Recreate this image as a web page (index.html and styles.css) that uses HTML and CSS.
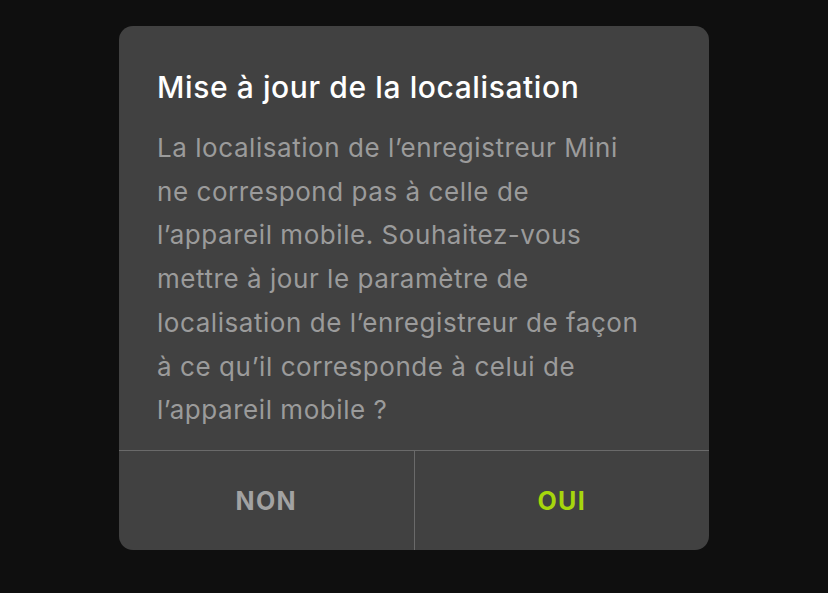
FILE: index.html
```html
<!DOCTYPE html>
<html lang="fr">
<head>
<meta charset="utf-8">
<link rel="stylesheet" href="styles.css">
</head>
<body>
<div class="dialog">
  <div class="content">
    <h1 class="title">Mise à jour de la localisation</h1>
    <p class="message">La localisation de l’enregistreur Mini<br>ne correspond pas à celle de<br>l’appareil mobile. Souhaitez-vous<br>mettre à jour le paramètre de<br>localisation de l’enregistreur de façon<br>à ce qu’il corresponde à celui de<br>l’appareil mobile ?</p>
  </div>
  <div class="actions">
    <div class="btn btn-no">NON</div>
    <div class="btn btn-yes">OUI</div>
  </div>
</div>
</body>
</html>
```
FILE: styles.css
```css
html, body {
  margin: 0;
  padding: 0;
  background: #0f0f0f;
  height: 100%;
}
body {
  font-family: Inter, "Noto Sans", sans-serif;
  padding-top: 26px;
  padding-left: 119px;
  box-sizing: border-box;
}
.dialog {
  width: 590px;
  height: 524px;
  background: #414141;
  border-radius: 14px;
  display: flex;
  flex-direction: column;
  overflow: hidden;
}
.content {
  flex: 1;
  padding: 42px 38px 0 38px;
}
.title {
  margin: 0;
  font-size: 30px;
  font-weight: 500;
  color: #ffffff;
  line-height: 38px;
  letter-spacing: 0.6px;
}
.message {
  margin: 20px 0 0 0;
  font-size: 26px;
  line-height: 43.7px;
  color: #9b9b9b;
  letter-spacing: 0.55px;
  white-space: nowrap;
}
.actions {
  height: 99px;
  border-top: 1px solid #6a6a6a;
  display: flex;
}
.btn {
  flex: 1;
  display: flex;
  align-items: center;
  justify-content: center;
  font-size: 25px;
  font-weight: 700;
  letter-spacing: 1.3px;
}
.btn-no {
  color: #a2a2a2;
  border-right: 1px solid #6a6a6a;
}
.btn-yes {
  color: #a6d60c;
}
```
